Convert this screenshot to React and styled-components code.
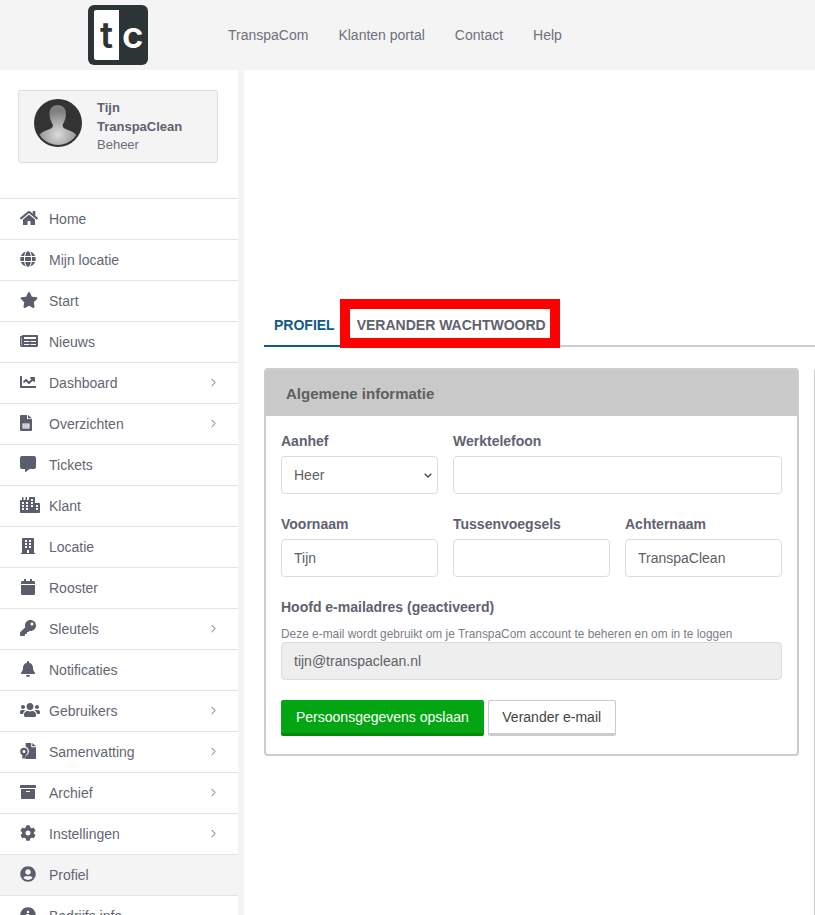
import React from 'react';
import styled, { createGlobalStyle } from 'styled-components';
import { ChevronRight } from 'lucide-react';
import {
  FaHome, FaGlobe, FaStar, FaNewspaper, FaChartLine, FaCommentAlt, FaCity, FaBuilding,
  FaCalendar, FaKey, FaBell, FaUsers, FaArchive, FaCog, FaUserCircle, FaInfoCircle,
} from 'react-icons/fa';

const GlobalStyle = createGlobalStyle`
  html, body {
    margin: 0;
    height: 100%;
    overflow: hidden;
    background: #fff;
    font-family: "Liberation Sans", Arial, sans-serif;
  }
  * { box-sizing: border-box; }
`;

const Page = styled.div`
  height: 915px;
  overflow: hidden;
  display: flex;
  flex-direction: column;
`;

const TopBar = styled.header`
  height: 70px;
  flex: none;
  background: #f4f4f4;
  display: flex;
  align-items: center;
  padding-left: 88px;
`;

const Logo = styled.svg`
  width: 60px;
  height: 60px;
  display: block;
`;

const TopNav = styled.nav`
  display: flex;
  gap: 30px;
  margin-left: 80px;
`;

const TopLink = styled.a`
  font-size: 14px;
  color: #6c717b;
`;

const Body = styled.div`
  flex: 1;
  min-height: 0;
  display: flex;
`;

const Sidebar = styled.aside`
  width: 244px;
  flex: none;
  background: #fff;
  border-right: 6px solid #f4f4f4;
  overflow: hidden;
`;

const UserCard = styled.div`
  margin: 20px 20px 35px 18px;
  height: 73px;
  background: #f4f4f4;
  border: 1px solid #dddddd;
  border-radius: 3px;
  display: flex;
  align-items: flex-start;
  padding: 8px 0 0 15px;
  gap: 15px;
`;

const Avatar = styled.svg`
  width: 48px;
  height: 48px;
  flex: none;
`;

const UserText = styled.div`
  width: 100px;
  font-size: 13px;
  line-height: 18.5px;
  color: #6a6d7a;
`;

const UserName = styled.div`
  font-weight: 700;
  color: #5f6270;
`;

const Menu = styled.ul`
  list-style: none;
  margin: 0;
  padding: 0;
`;

const MenuRow = styled.li`
  height: 41px;
  border-top: 1px solid #e4e4e4;
  background: ${(p) => (p.$active ? '#f4f4f4' : '#fff')};
  display: flex;
  align-items: center;
  padding: 0 18px 1px 20px;
  font-size: 14px;
  color: #636672;
`;

const MenuIcon = styled.span`
  width: 29px;
  flex: none;
  display: flex;
  align-items: center;
  margin-top: -2px;
  color: #5a5d6b;

  svg {
    flex: none;
    display: block;
  }
`;

const MenuLabel = styled.span`
  flex: 1;
`;

const Chevron = styled(ChevronRight)`
  width: 13px;
  height: 13px;
  stroke-width: 1.8;
  color: #636672;
`;

const Main = styled.main`
  flex: 1;
  min-width: 0;
  padding: 235px 0 0 20px;
  overflow: hidden;
`;

const Tabs = styled.div`
  display: flex;
  gap: 2px;
  height: 42px;
  border-bottom: 2px solid #cccccc;
`;

const Tab = styled.div`
  position: relative;
  height: 42px;
  padding: 12px 10px 0;
  font-size: 14px;
  font-weight: 700;
  color: ${(p) => (p.$active ? '#0f5b87' : '#5f6270')};
  border-bottom: 2px solid ${(p) => (p.$active ? '#0f5b87' : 'transparent')};
`;

const Highlight = styled.span`
  position: absolute;
  left: -7px;
  right: -4px;
  top: -6px;
  bottom: -3px;
  border: 10px solid #ff0000;
`;

const Columns = styled.div`
  display: flex;
  gap: 15px;
  margin-top: 21px;
  width: 700px;
`;

const Card = styled.section`
  width: 535px;
  flex: none;
  height: 388px;
  border: 2px solid #cccccc;
  border-radius: 4px;
  background: #fff;
  overflow: hidden;
`;

const SideCard = styled(Card)`
  width: 150px;
  height: 600px;
`;

const CardHead = styled.h2`
  margin: 0;
  height: 46px;
  background: #c9c9c9;
  padding-left: 20px;
  display: flex;
  align-items: center;
  font-size: 15px;
  font-weight: 700;
  color: #5e5e5e;
`;

const Form = styled.form`
  padding: 17px 15px 0;
`;

const FieldGrid = styled.div`
  display: grid;
  grid-template-columns: repeat(3, 157px);
  column-gap: 15px;
  row-gap: 22px;
`;

const Field = styled.div`
  grid-column: span ${(p) => p.$span || 1};
`;

const Label = styled.label`
  display: block;
  height: 17px;
  line-height: 17px;
  margin-bottom: 6px;
  font-size: 14px;
  font-weight: 700;
  color: #5f6270;
`;

const Input = styled.input`
  display: block;
  width: 100%;
  height: 38px;
  padding: 0 12px;
  border: 1px solid #dcdcdc;
  border-radius: 4px;
  background: ${(p) => (p.disabled ? '#eeeeee' : '#fff')};
  font: 14px "Liberation Sans", Arial, sans-serif;
  color: #5c5f66;
  outline: none;
`;

const Select = styled.select`
  display: block;
  width: 100%;
  height: 38px;
  padding: 0 12px;
  appearance: none;
  border: 1px solid #dcdcdc;
  border-radius: 4px;
  background: #fff url("data:image/svg+xml,%3Csvg xmlns='http://www.w3.org/2000/svg' width='8' height='5' viewBox='0 0 8 5'%3E%3Cpath d='M.7.7 4 4l3.300-3.300' fill='none' stroke='%23444' stroke-width='1.300'/%3E%3C/svg%3E") no-repeat right 5px center;
  font: 14px "Liberation Sans", Arial, sans-serif;
  color: #5c5f66;
  outline: none;
`;

const EmailBlock = styled.div`
  margin-top: 22px;
`;

const EmailLabel = styled(Label)`
  margin-bottom: 11px;
`;

const Hint = styled.p`
  margin: 0 0 1px;
  height: 14px;
  line-height: 14px;
  font-size: 11.9px;
  color: #7b7e88;
`;

const Actions = styled.div`
  display: flex;
  gap: 4px;
  margin-top: 20px;
`;

const Button = styled.button`
  height: 36px;
  padding: 0 ${(p) => (p.$primary ? '15px' : '13.5px')};
  border: ${(p) => (p.$primary ? '0' : '1px solid #cccccc')};
  border-bottom: 3px solid ${(p) => (p.$primary ? '#008a0c' : '#cccccc')};
  border-radius: 2px;
  background: ${(p) => (p.$primary ? '#03a612' : '#fff')};
  color: ${(p) => (p.$primary ? '#fff' : '#444')};
  font: 14px "Liberation Sans", Arial, sans-serif;
`;

function SheetIcon() {
  return (
    <svg width="12" height="16" viewBox="0 0 12 16" fill="currentColor">
      <path d="M0 1a1 1 0 0 1 1-1h6v4h5v11a1 1 0 0 1-1 1H1a1 1 0 0 1-1-1z" />
      <path d="M8 0l4 3.200H8z" />
      <path
        fill="#fff"
        fillRule="evenodd"
        d="M2.500 8.500h7v5h-7zM3.500 9.500v1h1.200v-1zm2 0v1h1.200v-1zm2 0v1h1v-1zM3.500 11.500v1h1.200v-1zm2 0v1h1.200v-1zm2 0v1h1v-1z"
      />
    </svg>
  );
}

function CertificateIcon() {
  return (
    <svg width="16" height="16" viewBox="0 0 17 17" fill="currentColor">
      <path d="M6 0h6v4.500h5V17H6v-3.500a5 5 0 0 0 0-9.500z" />
      <path d="M13 0l4 3.500h-4z" />
      <path fillRule="evenodd" d="M4.200 5a4 4 0 1 1 0 8 4 4 0 0 1 0-8zm0 2.400a1.600 1.600 0 1 0 0 3.200 1.600 1.600 0 0 0 0-3.200z" />
      <path d="M2.400 12.500h3.600V17l-1.800-1-1.800 1z" />
    </svg>
  );
}

const menuItems = [
  { label: 'Home', icon: <FaHome size={18} /> },
  { label: 'Mijn locatie', icon: <FaGlobe size={16} /> },
  { label: 'Start', icon: <FaStar size={18} /> },
  { label: 'Nieuws', icon: <FaNewspaper size={18} /> },
  { label: 'Dashboard', icon: <FaChartLine size={16} />, sub: true },
  { label: 'Overzichten', icon: <SheetIcon />, sub: true },
  { label: 'Tickets', icon: <FaCommentAlt size={16} /> },
  { label: 'Klant', icon: <FaCity size={20} /> },
  { label: 'Locatie', icon: <FaBuilding size={16} /> },
  { label: 'Rooster', icon: <FaCalendar size={16} /> },
  { label: 'Sleutels', icon: <FaKey size={16} />, sub: true },
  { label: 'Notificaties', icon: <FaBell size={16} /> },
  { label: 'Gebruikers', icon: <FaUsers size={20} />, sub: true },
  { label: 'Samenvatting', icon: <CertificateIcon />, sub: true },
  { label: 'Archief', icon: <FaArchive size={16} />, sub: true },
  { label: 'Instellingen', icon: <FaCog size={16} />, sub: true },
  { label: 'Profiel', icon: <FaUserCircle size={16} />, active: true },
  { label: 'Bedrijfs info', icon: <FaInfoCircle size={16} /> },
];

export default function App() {
  return (
    <Page>
      <GlobalStyle />
      <TopBar>
        <Logo viewBox="0 0 60 60">
          <rect width="60" height="60" rx="6" fill="#2c3436" />
          <path d="M8 5h23v50H8a2 2 0 0 1-2-2V7a2 2 0 0 1 2-2z" fill="#fff" />
          <text x="12" y="43" fontFamily="Inter, sans-serif" fontWeight="600" fontSize="37" fill="#2c3436">t</text>
          <text x="34" y="43" fontFamily="Inter, sans-serif" fontWeight="600" fontSize="37" fill="#fff">c</text>
        </Logo>
        <TopNav>
          <TopLink>TranspaCom</TopLink>
          <TopLink>Klanten portal</TopLink>
          <TopLink>Contact</TopLink>
          <TopLink>Help</TopLink>
        </TopNav>
      </TopBar>
      <Body>
        <Sidebar>
          <UserCard>
            <Avatar viewBox="0 0 48 48">
              <defs>
                <radialGradient id="bust" cx="50%" cy="70%" r="55%">
                  <stop offset="0%" stopColor="#dcdcdc" />
                  <stop offset="100%" stopColor="#808080" />
                </radialGradient>
                <clipPath id="round"><circle cx="24" cy="24" r="22" /></clipPath>
              </defs>
              <circle cx="24" cy="24" r="24" fill="#333333" />
              <path
                clipPath="url(#round)"
                fill="url(#bust)"
                d="M24 6c5 0 8 3.500 8 9 0 4-1.500 7.500-3 10-1 2 0 4 2.500 5 4 1.500 9 3 11 6.500L46 48H2l3-11.500c2-3.500 7-5 11-6.500 2.500-1 3.500-3 2.500-5-1.500-2.500-3-6-3-10 0-5.500 3-9 8-9z"
              />
            </Avatar>
            <UserText>
              <UserName>Tijn TranspaClean</UserName>
              Beheer
            </UserText>
          </UserCard>
          <Menu>
            {menuItems.map((item) => (
              <MenuRow key={item.label} $active={item.active}>
                <MenuIcon>{item.icon}</MenuIcon>
                <MenuLabel>{item.label}</MenuLabel>
                {item.sub && <Chevron />}
              </MenuRow>
            ))}
          </Menu>
        </Sidebar>
        <Main>
          <Tabs>
            <Tab $active>PROFIEL</Tab>
            <Tab>
              VERANDER WACHTWOORD
              <Highlight />
            </Tab>
          </Tabs>
          <Columns>
            <Card>
              <CardHead>Algemene informatie</CardHead>
              <Form>
                <FieldGrid>
                  <Field>
                    <Label>Aanhef</Label>
                    <Select defaultValue="Heer">
                      <option>Heer</option>
                      <option>Mevrouw</option>
                    </Select>
                  </Field>
                  <Field $span={2}>
                    <Label>Werktelefoon</Label>
                    <Input />
                  </Field>
                  <Field>
                    <Label>Voornaam</Label>
                    <Input defaultValue="Tijn" />
                  </Field>
                  <Field>
                    <Label>Tussenvoegsels</Label>
                    <Input />
                  </Field>
                  <Field>
                    <Label>Achternaam</Label>
                    <Input defaultValue="TranspaClean" />
                  </Field>
                </FieldGrid>
                <EmailBlock>
                  <EmailLabel>Hoofd e-mailadres (geactiveerd)</EmailLabel>
                  <Hint>Deze e-mail wordt gebruikt om je TranspaCom account te beheren en om in te loggen</Hint>
                  <Input disabled defaultValue="tijn@transpaclean.nl" />
                </EmailBlock>
                <Actions>
                  <Button type="button" $primary>Persoonsgegevens opslaan</Button>
                  <Button type="button">Verander e-mail</Button>
                </Actions>
              </Form>
            </Card>
            <SideCard />
          </Columns>
        </Main>
      </Body>
    </Page>
  );
}
